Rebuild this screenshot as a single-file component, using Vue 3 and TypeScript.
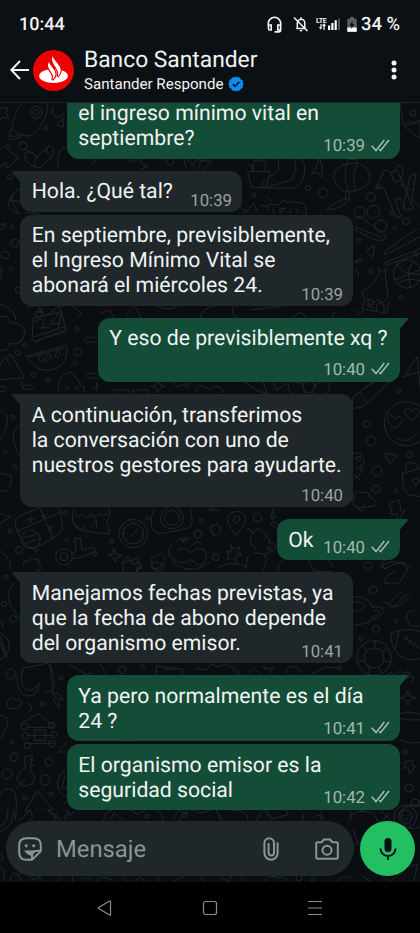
<script setup lang="ts">
interface Message {
  side: 'in' | 'out'
  lines: string[]
  time: string
  size: string
  tail?: boolean
  stacked?: boolean
  first?: boolean
}

const messages: Message[] = [
  { side: 'out', lines: ['el ingreso mínimo vital en', 'septiembre?'], time: '10:39', size: 'wide', first: true },
  { side: 'in', lines: ['Hola. ¿Qué tal?'], time: '10:39', size: 'short', tail: true },
  { side: 'in', lines: ['En septiembre, previsiblemente,', 'el Ingreso Mínimo Vital se', 'abonará el miércoles 24.'], time: '10:39', size: 'wide' },
  { side: 'out', lines: ['Y eso de previsiblemente xq ?'], time: '10:40', size: 'medium', tail: true, stacked: true },
  { side: 'in', lines: ['A continuación, transferimos', 'la conversación con uno de', 'nuestros gestores para ayudarte.'], time: '10:40', size: 'wide', tail: true, stacked: true },
  { side: 'out', lines: ['Ok'], time: '10:40', size: 'tiny', tail: true },
  { side: 'in', lines: ['Manejamos fechas previstas, ya', 'que la fecha de abono depende', 'del organismo emisor.'], time: '10:41', size: 'wide', tail: true },
  { side: 'out', lines: ['Ya pero normalmente es el día', '24 ?'], time: '10:41', size: 'wide', tail: true },
  { side: 'out', lines: ['El organismo emisor es la', 'seguridad social'], time: '10:42', size: 'wide' },
]

// Small rings scattered between the wallpaper doodles: x, y, radius
const rings: number[][] = [
  [46, 128, 2], [23, 146, 4], [10, 177, 2.5], [12, 227, 2], [15, 243, 4], [5, 255, 4], [11, 269, 2], [18, 290, 3],
  [170, 161, 4], [254, 195, 2], [308, 188, 2.5], [323, 193, 5], [379, 187, 2], [371, 197, 4.5], [392, 213, 2],
  [406, 221, 3.5], [395, 228, 2], [359, 240, 2], [371, 271, 2], [401, 297, 2], [416, 254, 2], [413, 113, 3],
  [40, 310, 2], [77, 329, 2.2], [78, 352, 3.6], [18, 353, 2.5], [25, 345, 2], [75, 363, 2], [33, 375, 2], [48, 380, 2],
  [2, 389, 3], [13, 417, 2], [5, 452, 2], [15, 467, 2], [399, 391, 2], [367, 424, 3.5], [371, 441, 5],
  [377, 471, 5], [376, 489, 4], [409, 455, 3], [396, 491, 2], [65, 513, 2], [10, 531, 2], [19, 550, 3.5],
  [36, 550, 2], [112, 541, 2], [198, 534, 4], [201, 521, 2], [148, 518, 2], [67, 540, 2], [95, 554, 2], [184, 540, 2],
  [269, 548, 2], [368, 566, 4], [373, 590, 4], [6, 577, 2], [4, 604, 2.5], [13, 619, 3.5], [11, 674, 5], [396, 621, 2],
  [376, 629, 3.5], [361, 639, 2], [407, 675, 3], [122, 670, 3.8], [143, 667, 2], [61, 678, 2], [42, 704, 2],
  [12, 742, 2], [14, 757, 4], [7, 774, 5], [49, 762, 4], [45, 780, 5], [25, 798, 2], [51, 794, 2], [405, 752, 2],
  [409, 788, 4], [340, 668, 2], [147, 816, 2], [184, 815, 2.5], [313, 880, 2], [299, 878, 3], [415, 803, 4],
]
</script>

<template>
  <div class="screen">
    <header class="top">
      <div class="status">
        <span class="clock">10:44</span>
        <svg class="ic-head" viewBox="0 0 15 17" width="15" height="17">
          <path d="M1.3 10.5V7.5a6.2 6.2 0 0 1 12.4 0v6.8q0 1.6-1.6 1.6H7.6M1.5 9h2.7v5H2.6q-1.1 0-1.1-1.3zM13.5 9h-2.7v5h2.7z" fill="none" stroke="#f4f6f6" stroke-width="1.6" />
        </svg>
        <svg class="ic-bell" viewBox="0 0 16 16" width="16" height="16">
          <path d="M3.3 12.6h9.4M4.3 12.4V7.2A3.9 3.9 0 0 1 8 3.2a3.8 3.8 0 0 1 3.8 3.8v5M8 1.2v2" fill="none" stroke="#f4f6f6" stroke-width="1.5" />
          <path d="M6.5 14h3q-.3 1.5-1.5 1.5T6.5 14z" fill="#f4f6f6" />
          <path d="M1 1.5l13.5 13.5" stroke="#f4f6f6" stroke-width="1.5" />
        </svg>
        <div class="signal">
          <span class="lte">LTE</span>
          <svg viewBox="0 0 25 14" width="25" height="14">
            <path d="M5 7v5M3.5 10.2L5 12M8 13V7.5M6.6 9L8 7.3 9.4 9" fill="none" stroke="#f4f6f6" stroke-width="1.2" />
            <path d="M12 8.5h2.2V13H12zM15.3 6h2.2v7h-2.2zM18.6 3.3h2.2V13h-2.2z" fill="#fff" />
            <path d="M22 1.5h2V13h-2z" fill="#4b5053" />
          </svg>
        </div>
        <svg class="ic-batt" viewBox="0 0 10 15" width="10" height="15">
          <path d="M3 0h4v1.8h2.7v13H.3v-13H3z" fill="#595e60" />
          <path d="M.3 10.5h9.4v4.3H.3z" fill="#fff" />
          <path d="M5.7 3.5L2.4 8.7h2.1L4 12.3l3.5-5.4H5.3z" fill="#0b1014" />
        </svg>
        <span class="percent">34 %</span>
      </div>

      <div class="contact">
        <svg class="back" viewBox="0 0 20 20" width="20" height="20">
          <path d="M10 1L1.3 10 10 19M1.5 10H19" fill="none" stroke="#f2f4f4" stroke-width="2" />
        </svg>
        <svg class="avatar" viewBox="0 0 123 123" width="41" height="41">
          <circle cx="61.500" cy="61.500" r="61.500" fill="#ec0000" />
          <ellipse cx="61.500" cy="78" rx="43" ry="21" fill="#fff" />
          <g fill="#fff" stroke="#ec0000" stroke-width="7" paint-order="stroke">
            <path d="M59 18c-4 9-2 16 3 24l10 17c4 7 5 14 2 21 10-10 12-21 5-32L67 32c-5-6-7-9-8-14z" />
            <path d="M48 36c-5 8-3 15 1 22l8 13c4 6 4 12 1 19 10-9 12-18 6-29L54 47c-4-5-5-7-6-11z" />
          </g>
        </svg>
        <div class="who">
          <div class="name">Banco Santander</div>
          <div class="sub">
            <span>Santander Responde</span>
            <svg viewBox="0 0 16 16" width="16" height="16">
              <path d="M8 .4l1.8 1.2 2.1-.2.9 2 2 .9-.2 2.100L15.800 8l-1.200 1.800.2 2.100-2 .9-.9 2-2.100-.2L8 15.600l-1.800-1.200-2.100.2-.9-2-2-.9.2-2.100L.2 8l1.200-1.800-.2-2.100 2-.9.9-2 2.100.2z" fill="#0a8cf5" />
              <path d="M4.700 8.200L7 10.400l4.300-4.600" fill="none" stroke="#0b1014" stroke-width="1.600" />
            </svg>
          </div>
        </div>
        <svg class="more" viewBox="0 0 6 20" width="6" height="20">
          <circle cx="3" cy="3" r="2.500" /><circle cx="3" cy="10" r="2.500" /><circle cx="3" cy="17" r="2.500" />
        </svg>
      </div>
    </header>

    <main class="chat">
      <svg class="wallpaper" viewBox="0 103 420 779" width="420" height="779" aria-hidden="true">
        <g fill="none" stroke="#20272b" stroke-width="1">
          <circle v-for="(r, i) in rings" :key="i" :cx="r[0]" :cy="r[1]" :r="r[2]" />
        </g>
        <g fill="none" stroke="#20272b" stroke-width="3" stroke-linejoin="round" stroke-linecap="round">
          <g transform="translate(0 100) scale(.33333)">
            <path d="M0 25l25-3-8 18 10 15-20-3-7 8M62 15C45 35 38 65 35 88q20 20 55 20 25-12 48-60 8-20 3-38M35 88l-8 12 12 10 15-4M30 100q-6 20 8 20l25-10" />
            <circle cx="108" cy="37" r="18" /><circle cx="108" cy="37" r="9" />
            <path d="M0 148l25-14-2 15 34 24-36 32-3-16-18 10M80 155q30 0 28 20l40-38q20 10 8 32l-34 34q-25 0-42-18-12-14 0-30zM112 168q-16 22-4 36M145 137q-14 18 5 28M158 20v22l13 12 24-14M170 75l20-20v25zM175 205q-8-45 15-62 20-6 30 20l30-25q15 10-2 32M290 130q22 15-12 65" />
            <path d="M385 180l18 6 16-14 4 18 20 8-20 10-4 14M560 205q-10-20-6-35l25 26q3-15 22-24 2 25-10 38M596 180l40 5-30 25M744 215h66l-12 48h-42zM760 215v-30q18-12 36 4v26M740 195h16v18M795 240q-18 22 2 24h88q35-25 28-70l-8-20M835 180v32q-12 10-24 16M885 180q5 30-10 60l-82 24" />
            <path d="M955 175q2 20-20 45 20-5 32 12 3-28-8-57M1003 220c5-30 90-50 104 0s-70 70-92 40-12-30-12-40zM1040 196q-12 38 5 72M1070 196q-18 35-2 74M1040 190l5-12h24l4 14M1038 275l-2 22q-35 8-55 32 35 3 68-30l-2-24M1035 300l12-4" />
            <path d="M1155 210l25 8 14-24 16 8-6 38 36 84-22 8-18-38-15 5 18 50-14 4-38-90-24 2zM1174 220l16-10 14 28-18 10zM1230 230l18-10-12 80 24 22M1230 230l-22 100M1205 255l30 14M1200 10l10 65q15-15 40-5M1215 80l45-20v55z" />
            <circle cx="1079" cy="337" r="17" /><circle cx="1120" cy="335" r="19" /><circle cx="1142" cy="378" r="18" />
            <path d="M1060 355q15-15 40 10l50 35q14 15-5 23-25 0-83-36M1065 380l80 32M1098 452l25-15-5 34zM1153 455l97-68M1158 464l102-54M1155 488l105-42M1162 495l98-35M1153 455q-4 10 5 9M1155 488q-2 9 7 7" />
            <circle cx="1222" cy="522" r="42" /><path d="M1190 493q20 35 70 30M1240 484q-25 25-8 80M1182 540l78-30M1195 550q22-20 64-8" />
            <path d="M1087 576q20-10 52-55l-5-15 12 8 12-8-2 16 8 70q-20 25-30 5-12 15-24 0-20 5-23-21zM1094 600l-9 26 74 14 8-34M1130 632v-14q14-20 22 0v18" /><circle cx="1112" cy="607" r="8" />
            <path d="M730 340l12-10 20-22 10 30M720 320l22 15M805 330l-2-16h30l12-8q6-8 15 0l45 2q16 6 14 35M820 340v-17M840 340v-15h18l-14 13M870 325v14M892 340q10-10-8-15M800 290l15 12M780 315l18 5" />
            <path d="M65 265q-35 10-40 50 5 20 35 25M40 280q-10 28 15 55M30 300l30 5M75 340q30-5 50 8M0 375l18 -5-5 12-13 10M0 500q10 15 0 40M0 612q50 20 48 48M83 620l30-4 20 30M140 645l40-28 5 38M220 620l24 20 -15 15M300 640l30-10 15 28M380 645q20-30 30-20l12 28M470 617q40 20 60 2M600 660q0-40 60-45M700 620q-12 25 20 38M752 630l95-12M880 655q22-35 40 0M1000 660q-8-22 10-24M1062 630l15 15 14-15M1100 615l20 10" />
            <path d="M1063 485l20-8q12 12-18 10M1062 505q16 10 12 25" />
          </g>
          <g transform="translate(0 310) scale(.33333)">
            <path d="M0 20q25-8 30 18 45 0 44 33-12 42-45 28-2 24-29 23M100 25l85-20 12 54-92 37q-12-2-8-18zM103 80l95-32M108 92l90-28M105 34l15-7q25 5 3 28l22-4M175 12l-24 31 30-4M180 14l-5 44M110 20l-3-14h18v12M160 5v10" />
            <path d="M80 138l120-32q8 65-52 75-50 0-68-43zM92 140l97-25M116 145q0-15 10-8 10 17-2 18-12-3-8-10M145 132q-15 15-4 22 10-2 12-18zM172 122l-8 18q10 10 17-8z" />
            <path d="M0 165q20-35 35-30l38 68-73 6M18 145l14 22M285 82h-25q-12 7 0 14h30M290 190h-24q-12 7 0 14h30M175 240c-4-35 18-55 45-52q0 15 18 25-2 18 15 18v14M196 228l12 5-10 6M235 228l-10 6 10 6M65 215q-8 30 38 22M68 232q5-12 28-5M278 240l14-14-3 15M288 215l4 13" />
            <path d="M340 250v-10h45v10M398 250v-10h45v10M475 212l6 12 14 5-14 5-8 14-5-14-14-5 14-5zM520 215l10 15 34-10-2 12M588 245q0-15 15-18 15 0 25 12 12-14 28-8 15 5 14 17M735 215q30 30 65 35l-10-35M820 215l10 25 30-20M865 222q-4 15 12 30M985 218q10 20-8 34" />
            <circle cx="927" cy="230" r="18" /><path d="M910 222l-40-10M925 212l-4-10M944 225l28-12M938 244l5 8M916 244l-5 7" />
            <path d="M1062 258l20-14 80-60 18 20-90 85-35 8zM1080 248l18 28M1155 190l18 24M1095 235l70-50M1212 200l40-60 8 90M1212 200l48-15" />
            <circle cx="1219" cy="341" r="66" /><path d="M1183 355q-28-22-17-36 14-7 18 10 12-18 23-3 2 13-24 29zM1234 332q-28-20-17-34 14-7 18 8 12-18 23-3 2 13-24 29zM1192 385q32 20 60-15M1152 430l38 5-18 25zM1060 430q25-5 26 10 15 12-4 28 12 20-20 40M1065 445q12-10 18 0-4 14-18 0M1068 475q12-10 20 0M1065 495l15 15" />
            <path d="M1062 558q8-20 22-10 30-5 25 15 28 10 16 25l-50 5q-24-5-13-35zM1208 490q-5 50 20 65l32 5M1208 490l50-15M1218 480q-8-25 20-22 16 4 18 20M1242 508q15-8 14 8l-10 12-10-20M1070 590q20 30 22-5M820 595q-20 40 28 55" />
            <path d="M1170 578l28-8 4 32 12-2-18 35-5-25-14 3zM1110 640q22-20 40 15M0 300q45 20 0 90M60 345q-42 20 0 95M0 490l32 5q8 30-15 50l-17-4M0 610l32 10-32 20" />
            <path d="M60 618l88-38q20-3 35 28l4 48q-12 30-88 58-30 0-50-60-10-30 11-36zM118 592l42 95M50 665l133-60M90 620l4 18M80 630l22-2M130 610l5 15M125 622l18-10M142 645l18 26M142 668l16-20" /><circle cx="93" cy="688" r="28" /><path d="M70 684l40-12M76 700l40-14" />
            <path d="M222 600q-10 18 0 40-2 25 105 32-2-30-8-40 20-20 5-40M225 610q12 20 22 0 10 20 25 0 18 20 26 0 16 14 24 0M230 650l15 10 10-12M265 625q10-15 20 0 0 28-15 25M290 630v22" />
            <circle cx="400" cy="671" r="43" /><circle cx="400" cy="671" r="31" /><path d="M395 676l20-20M400 634v8M366 671h8M426 671h8" />
            <path d="M465 597q-15 18-10 55 8 22 40 17l75-16q12-15 2-55" /><circle cx="516" cy="623" r="34" /><circle cx="516" cy="623" r="22" />
            <path d="M625 602l18-6 15 8M630 592l12 15M710 675q-38-35-24-60 28-22 48 0 8 25-24 60z" /><circle cx="710" cy="628" r="10" /><path d="M632 650l22-8 10 24-22 12zM772 610l12 8v12l-12 6-11-6v-12zM645 730l14 8-7 15-15-6z" />
            <path d="M520 700q-20 12-12 38 35 35 65 10 40 40 46-15-10-35-48-5-28-25-35-5M530 695l12-12 6 12M550 690l20-5M575 705l18-12 10 10M693 705l8 14 18-8-8 16 14 8-18 4 2 16-12-12-16 6 6-14-8-12 14 4zM740 660q14-10 18 12l15-18 10 12q20-8 14 14 18 4 8 18 25-4 20 20l-30 15-32-5M755 680q-15 25 18 38M745 735l-10 45M790 730l10 20-12 30" />
            <circle cx="192" cy="740" r="25" /><circle cx="192" cy="740" r="12" /><path d="M215 730l12-4-2-40 16-2 5 36 32-8 12 10-48 20-25 4M340 715l8 16 18 5-16 6-4 14-8-14-14-8 16-2zM365 760l18-22 12 14 20-12-4 20 14 8-15 6 6 20M455 745l30-15 12 12-18 32-20 2zM0 722q42 30 28 58M70 770q-4-18 16-16 2-14 18-5 18-6 12 15 18 12-5 20" />
            <path d="M815 600l14 24-16-6 10 18-12 6 20 14M1140 770q35-30 90 0" />
          </g>
          <g transform="translate(0 560) scale(.33333)">
            <path d="M370 8l22-8 8 14 18-8 8 18-18 6 6 14-22 8-6-14-16 4zM450 20l12-16 32 12-10 20zM515 0q15 28 65 28 30-5 48-22M650 25q40-28 90-5M850 0q-28 20-10 40M925 0l16 34h50M985 0l14 20M1155 0q-22 20 0 26 34-18 56-20l12 22-28 45-18-6-22 5q-3-30 28-35" />
            <path d="M42 70q-25 25-12 62l30 48M0 220q28 10 28 40-8 34-28 38M0 228l20 60M0 250l18 42M0 180l8 5v18" />
            <path d="M1062 110q50 0 54 32 30-6 34 10-8 25-34 26-15 15-54 18M1062 125q30 2 34 15-4 12-34 14M1122 152q18-2 16 6-5 10-22 12M1152 125l14 8 40-40M1168 138l14 0 40-35M1180 142l16-4 36-30M1242 152q-35 0-15 40 18 12 30 5" />
            <path d="M1172 220q50-22 88-5M1172 220q0 60 50 80l38-4M1196 214l-10 52M1208 230l50 35M1222 228l-6 12M1234 238l-6 12M1246 245l-6 12" />
            <circle cx="1122" cy="294" r="52" /><circle cx="1122" cy="294" r="30" /><path d="M1088 256l12 16M1125 242v22M1162 262l-15 14M1172 306l-22-4M1146 340l-12-20M1105 344l5-24M1072 306l22-6" />
            <path d="M1160 345l14-8 6 10 20-15 16 14 26 5-5 18M1224 392l6 16 18 6-18 6-6 16-8-16-16-6 16-6zM1200 460q30-10 60 5M1200 475q35 8 60 5M1200 540q25 12 60 8M1218 605l22-6-4 20 10 0-18 24-3-20-12 2z" />
            <path d="M68 325l74-15q18 4 22 70-6 14-30 18M68 325l-5 40q20 50 54 5-5 40-34 38-38-8-30-60M150 315l8 76M22 425l12-12 18 6q18-2 10 18-20 14-36 8zM0 465l25 10q-4 40-25 60M85 430q18 8 5 25M62 492l52-32 50 40M155 396l20 4 15 20-12-4v26l-20-25 12-2z" />
            <path d="M82 502h76M82 526h76M82 550h76M105 510h30v32h-30z" /><circle cx="74" cy="500" r="10" /><circle cx="76" cy="528" r="10" /><circle cx="82" cy="556" r="10" /><circle cx="155" cy="496" r="10" /><circle cx="162" cy="524" r="10" /><circle cx="156" cy="550" r="10" />
            <path d="M176 576l25-32M176 576h24M210 315l48 28M300 313l20 30M470 318l78 10-4 18M470 318l-2 28M490 326l34 4M585 325l32 5 18-18 20 8 24-8 20 14 12 18M700 318q15 8 20 28M785 318l20 10 16-5-15 22M865 343q-15-15 8-25 20 0 34 22M250 345l28-6M740 345l20-22 24 24M930 345l48-25 40 6" />
            <path d="M75 590l22-5-6 45q20 20 6 40-25 18-42-5-12-20 20-40zM90 600l10 0M94 615l8 0M38 690q-22-12-38 15M38 690q18 15 8 90M50 685l20-22M70 665l8-5M112 692l-36 60h14l-30 28M112 692l48 58h-16l36 30M108 750l6-4M132 745l-4 5M195 630q-30 25-20 60 12 20 30 20M195 645l-10 40 18-5M190 735l14-14 34 30M205 755l-12 25M370 545l12-8 10 8M330 780l12-22 28 22M520 778l14-26 30 8M650 755l18 25M790 750l30 30M960 752q12 12 2 28M1050 770q12-16 40-15M1195 770q5-40 65-35" />
            <circle cx="1238" cy="770" r="36" />
          </g>
          <g transform="translate(0 810) scale(.33333)">
            <path d="M0 65q42-15 42-65M0 50q25-15 24-50M90 0l8 22-12 14M140 0q12 15 30 12l-8 20M200 0l10 15 14-10M310 32q5-30 25-32M470 0q18 10 20 32M390 0l20 12 28-12M565 0l-30 32M580 0l20 10 35-10M650 0l12 28M695 0q50-4 50 34M770 32l14-30M800 0l14 26 50-12-6-14M900 0q20 15 5 32M940 22q20-18 32 10" />
            <circle cx="1216" cy="20" r="34" /><circle cx="1216" cy="20" r="20" /><path d="M1207 16h4M1222 16h4M1208 26q8 8 16 0M1050 0q10 24-5 36M1060 60l14 40-24 12M1050 120q-10 12 4 18M1075 0l44 10 18 28M1140 0l38 38M1150 30l20-20" />
            <path d="M0 130q12 0 8 18l-8 10M0 170q18 10 10 40M30 215q5-35 22-25l14 25M42 200l40-18 18 28 35-18M110 190l14 22M180 200l-10 16M218 198v18M245 205h30M288 216q14-24 50-6M372 200l10 16M405 212l16-10 14 12M475 200v16M520 214l30-14M600 200l18 16M660 196l22 20 14-18M722 200l16 16M795 216q5-26 40-12 20-8 30 10M1010 216q10-24 50-12M1090 200l24 16M1150 200l15 14M1200 175l52-12-10 50M1170 214l45-34" />
          </g>
        </g>
      </svg>

      <div class="thread">
        <div
          v-for="(m, i) in messages"
          :key="i"
          class="bubble"
          :class="[m.side, m.size, { tail: m.tail, stacked: m.stacked, first: m.first }]"
        >
          <svg v-if="m.tail" class="corner" viewBox="0 0 14 14" width="14" height="14">
            <path d="M14 0H1.200Q-.6.200.500 1.700L8 10.500V14h6z" />
          </svg>
          <div class="text">
            <div v-for="line in m.lines" :key="line">{{ line }}</div>
          </div>
          <div class="meta">
            <span>{{ m.time }}</span>
            <svg v-if="m.side === 'out'" viewBox="0 0 19 13" width="19" height="13">
              <path d="M.7 6.800L5 11.600 13.300 1M8.300 10.300L9.500 11.600 18 1" />
            </svg>
          </div>
        </div>
      </div>

      <div class="composer">
        <div class="field">
          <svg class="sticker" viewBox="0 0 24 24" width="24" height="24">
            <path d="M22.800 13V8.500Q22.800 1.200 15.500 1.200h-7Q1.200 1.200 1.200 8.500v7q0 7.300 7.300 7.300H14L22.800 14.200z" />
            <path d="M22.800 13.800h-3.300q-5.500 0-5.500 5.500v3.200" />
            <path class="solid" d="M6.500 13.800h11q-3 1.200-3.500 4.700-4.500 0-7.500-4.700z" />
            <circle cx="8.200" cy="8.800" r="1.300" /><circle cx="15.800" cy="8.800" r="1.300" />
          </svg>
          <span class="hint">Mensaje</span>
          <svg class="clip" viewBox="0 0 16 24" width="16" height="24">
            <path d="M14.600 5.500v10.600a6.600 6.600 0 0 1-13.200 0V6a4.800 4.800 0 0 1 9.600 0v9.800a2.700 2.700 0 0 1-5.400 0V6" />
          </svg>
          <svg class="camera" viewBox="0 0 24 22" width="24" height="22">
            <path d="M2.500 4.200h4.200L8.900 1.500h6.200l2.200 2.700h4.200q1.300 0 1.300 1.300v14q0 1.300-1.300 1.300h-19q-1.300 0-1.300-1.300v-14q0-1.300 1.300-1.300z" />
            <circle cx="12" cy="12.200" r="4.500" />
          </svg>
        </div>
        <div class="mic">
          <svg viewBox="0 0 18 24" width="18" height="24">
            <rect x="5.500" y="1" width="7" height="14" rx="3.500" fill="#0b1014" />
            <path d="M1.500 11.500a7.500 7.500 0 0 0 15 0M9 19v4" fill="none" stroke="#0b1014" stroke-width="1.900" />
          </svg>
        </div>
      </div>
    </main>

    <nav class="keys">
      <svg viewBox="0 0 16 16" width="16" height="16"><path d="M13.500 1.200v13.600q-.4.500-1 .2L1.700 8.600q-.6-.6 0-1.200L12.500 1q.6-.3 1 .2z" /></svg>
      <svg viewBox="0 0 16 16" width="16" height="16"><rect x="1.500" y="1.500" width="13" height="13" rx="2" /></svg>
      <svg viewBox="0 0 16 16" width="16" height="16"><path d="M1 1.500h14M1 8h14M1 14.500h14" /></svg>
    </nav>
  </div>
</template>

<style>
body { background: #000; }
</style>

<style scoped>
.screen {
  width: 420px;
  height: 933px;
  display: flex;
  flex-direction: column;
  overflow: hidden;
  background: #000;
  color: #f1f3f3;
  font-family: Roboto, "Liberation Sans", sans-serif;
  text-rendering: geometricPrecision;
}
svg { display: block; flex: none; }
.top {
  flex: none;
  box-sizing: border-box;
  height: 103px;
  background: #0b1014;
  border-bottom: 1px solid #1c2327;
}
.status {
  display: flex;
  align-items: center;
  height: 48px;
  padding: 0 19px;
  font-size: 18px;
  font-weight: 500;
  white-space: nowrap;
}
.clock { width: 248px; flex: none; }
.ic-bell { margin-left: 11px; }
.signal { display: flex; margin-left: 7px; }
.lte { width: 0; font-size: 7px; line-height: 8px; font-weight: 700; letter-spacing: -0.3px; }
.ic-batt { margin-left: 6px; }
.percent { margin-left: 4px; font-size: 18.400px; }
.contact { display: flex; align-items: center; height: 44px; padding-left: 10px; }
.avatar { margin-left: 3px; }
.who { width: 300px; margin-left: 10px; padding-top: 2px; white-space: nowrap; }
.name { font-size: 22.800px; line-height: 25px; }
.sub { display: flex; align-items: center; gap: 5px; height: 22px; padding-top: 1px; font-size: 15.100px; line-height: 20px; }
.more { margin-left: 7px; fill: #f2f4f4; }
.chat {
  position: relative;
  flex: none;
  height: 779px;
  display: flex;
  flex-direction: column;
  justify-content: flex-end;
  overflow: hidden;
  background: #0a0e12;
}
.wallpaper { position: absolute; left: 0; top: 0; }
.thread {
  position: relative;
  display: flex;
  flex-direction: column;
  align-items: flex-start;
  gap: 3px;
  padding: 0 20px;
}
.bubble {
  position: relative;
  box-sizing: border-box;
  display: flex;
  justify-content: space-between;
  align-items: flex-end;
  padding: 8.500px 10px 7.500px 11.300px;
  border-radius: 12px;
  background: #1f272a;
}
.in { --shade: #1f272a; padding-left: 11.700px; }
.out { --shade: #144d37; align-self: flex-end; background: #144d37; }
.wide { width: 333px; }
.medium { width: 302px; }
.short { width: 222px; }
.tiny { width: 123px; }
.first { padding-top: 20px; }
.tail { margin-top: 9px; }
.in.tail { border-top-left-radius: 0; }
.out.tail { border-top-right-radius: 0; }
.stacked { flex-direction: column; align-items: flex-start; }
.stacked .meta { align-self: flex-end; margin-top: 8.500px; }
.corner { position: absolute; left: -8px; top: 0; fill: var(--shade); }
.out .corner { left: auto; right: -8px; transform: scaleX(-1); }
.text { flex: 1; min-width: 0; font-size: 21.200px; line-height: 25px; white-space: nowrap; }
.stacked .text { flex: none; }
.meta {
  flex: none;
  display: flex;
  align-items: center;
  gap: 6px;
  height: 20px;
  margin-bottom: -6.500px;
  font-size: 16.800px;
  line-height: 20px;
  color: #9ba1a3;
}
.out .meta { margin-bottom: -5px; color: #a1b8ae; }
.meta svg { margin-top: -2px; fill: none; stroke: #a9beb5; stroke-width: 1.500; }
.composer {
  position: relative;
  display: flex;
  align-items: center;
  gap: 6px;
  padding: 11px 5px 6px 6px;
}
.field {
  box-sizing: border-box;
  width: 348px;
  height: 55px;
  border-radius: 28px;
  background: #1f272a;
  display: flex;
  align-items: center;
  padding-left: 12px;
}
.field svg { fill: none; stroke: #8b9497; stroke-width: 2; }
.sticker circle, .field .solid { fill: #8b9497; stroke-width: .5; }
.hint { width: 207px; margin-left: 14px; color: #8b9497; font-size: 23.800px; line-height: 28px; }
.camera { margin-left: 36px; }
.mic {
  width: 55px;
  height: 55px;
  border-radius: 50%;
  background: #23c063;
  display: flex;
  align-items: center;
  justify-content: center;
}
.keys {
  height: 51px;
  display: flex;
  align-items: center;
  justify-content: center;
  gap: 89px;
}
.keys svg { fill: none; stroke: #8c8c8c; stroke-width: 1.200; }
</style>
